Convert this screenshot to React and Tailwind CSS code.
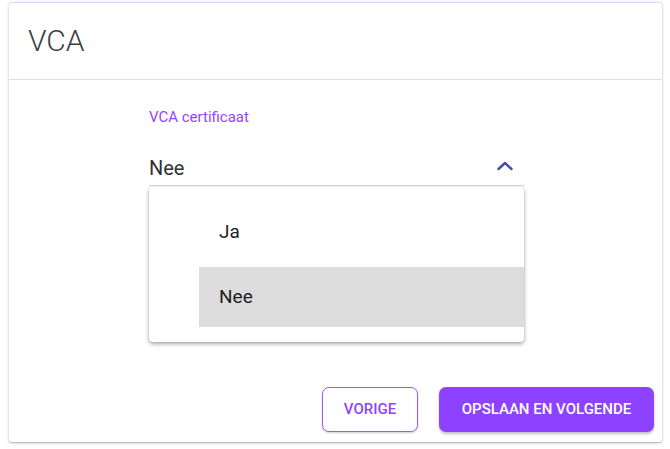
import React, { useState } from 'react';

const options = ['Ja', 'Nee'];

const App = () => {
    const [value] = useState('Nee');

    return (
        <div className="w-[670px] h-[449px] bg-white pt-[2px] pl-[9px] font-['Roboto',sans-serif]">
            <div className="w-[653px] h-[440px] bg-white border-t border-[#e0d8ff] rounded-[3px] shadow-[0_1px_3px_rgba(0,0,0,0.25),0_1px_1px_rgba(0,0,0,0.12)] flex flex-col">
                <div className="h-[77px] border-b border-[#e0dafc] flex items-center px-[19px]">
                    <h1 className="text-[30px] font-light text-[#3a3f47] leading-none">VCA</h1>
                </div>

                <div className="flex-1 pl-[140px] pt-[28px]">
                    <div className="w-[375px]">
                        <label className="block text-[15px] text-[#9545ff] leading-[18px]">VCA certificaat</label>
                        <div className="mt-[29px] h-[31px] border-b border-[#d6d6d6] flex items-start justify-between">
                            <span className="text-[20px] text-[#2f3136] leading-[26px]">{value}</span>
                            <svg className="mr-[10px] mt-[5px]" width="18" height="12" viewBox="0 0 18 12" fill="none">
                                <path d="M2.5 9 L9 3 L15.5 9" stroke="#3f4fb0" strokeWidth="2.4" strokeLinecap="round" strokeLinejoin="round" />
                            </svg>
                        </div>
                        <div className="mt-[1px] bg-white rounded-[4px] shadow-[0_2px_4px_rgba(0,0,0,0.35),0_0_2px_rgba(0,0,0,0.1)] pt-[20px] pb-[15px]">
                            {options.map((opt, i) => (
                                <div
                                    key={opt}
                                    className={`ml-[50px] h-[60px] px-5 flex items-center text-[19px] text-[#222] ${i === 0 ? 'pb-[10px]' : ''} ${opt === value ? 'bg-[#dcdcdc]' : ''}`}
                                >
                                    {opt}
                                </div>
                            ))}
                        </div>
                    </div>
                </div>

                <div className="flex justify-end gap-[21px] pr-[8px] pb-[10px]">
                    <button className="h-[45px] w-[96px] rounded-[7px] border border-[#9a5cff] bg-white text-[#8e44ff] text-[15px] font-medium shadow-[0_1px_2px_rgba(0,0,0,0.2)]">
                        VORIGE
                    </button>
                    <button className="h-[45px] w-[215px] rounded-[7px] bg-[#8c42ff] text-white text-[15px] font-medium shadow-[0_2px_3px_rgba(0,0,0,0.25)]">
                        OPSLAAN EN VOLGENDE
                    </button>
                </div>
            </div>
        </div>
    );
};

export default App;
